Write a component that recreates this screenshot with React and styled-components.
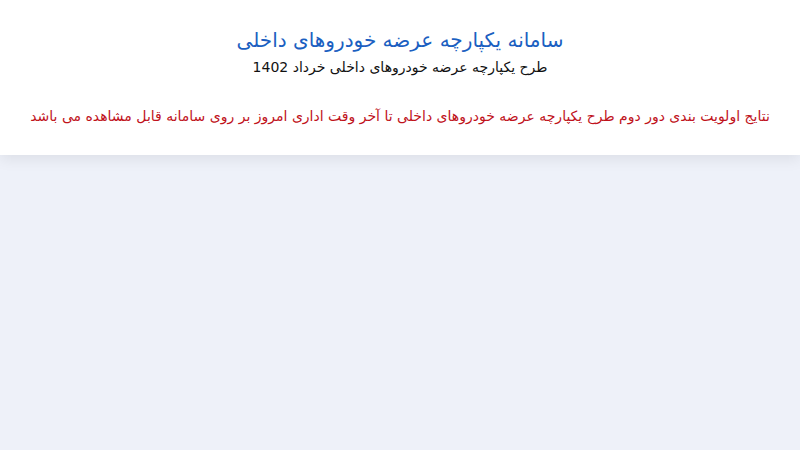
import React from "react";
import styled, { createGlobalStyle } from "styled-components";

const GlobalStyle = createGlobalStyle`
  html, body {
    margin: 0;
    padding: 0;
    background-color: #eef1f9;
    font-family: Tahoma, "DejaVu Sans", sans-serif;
  }
`;

const Page = styled.div`
  width: 800px;
  min-height: 450px;
  direction: rtl;
  background-color: #eef1f9;
`;

const Header = styled.header`
  height: 155px;
  background-color: #fff;
  box-shadow: 0 4px 14px rgba(0, 0, 0, 0.08);
  display: flex;
  flex-direction: column;
  align-items: center;
  padding-top: 26px;
  box-sizing: border-box;
`;

const Title = styled.h1`
  margin: 0;
  font-size: 20px;
  font-weight: normal;
  color: #1b5fc1;
  line-height: 28px;
`;

const SubTitle = styled.h2`
  margin: 1px 0 0;
  font-size: 14px;
  font-weight: normal;
  color: #111;
  line-height: 24px;
`;

const Notice = styled.p`
  margin: 25px 0 0;
  font-size: 14px;
  color: #c0121b;
  line-height: 24px;
`;

const App = () => {
  return (
    <Page>
      <GlobalStyle />
      <Header>
        <Title>سامانه یکپارچه عرضه خودروهای داخلی</Title>
        <SubTitle>طرح یکپارچه عرضه خودروهای داخلی خرداد 1402</SubTitle>
        <Notice>
          نتایج اولویت بندی دور دوم طرح یکپارچه عرضه خودروهای داخلی تا آخر وقت
          اداری امروز بر روی سامانه قابل مشاهده می باشد
        </Notice>
      </Header>
    </Page>
  );
};

export default App;
